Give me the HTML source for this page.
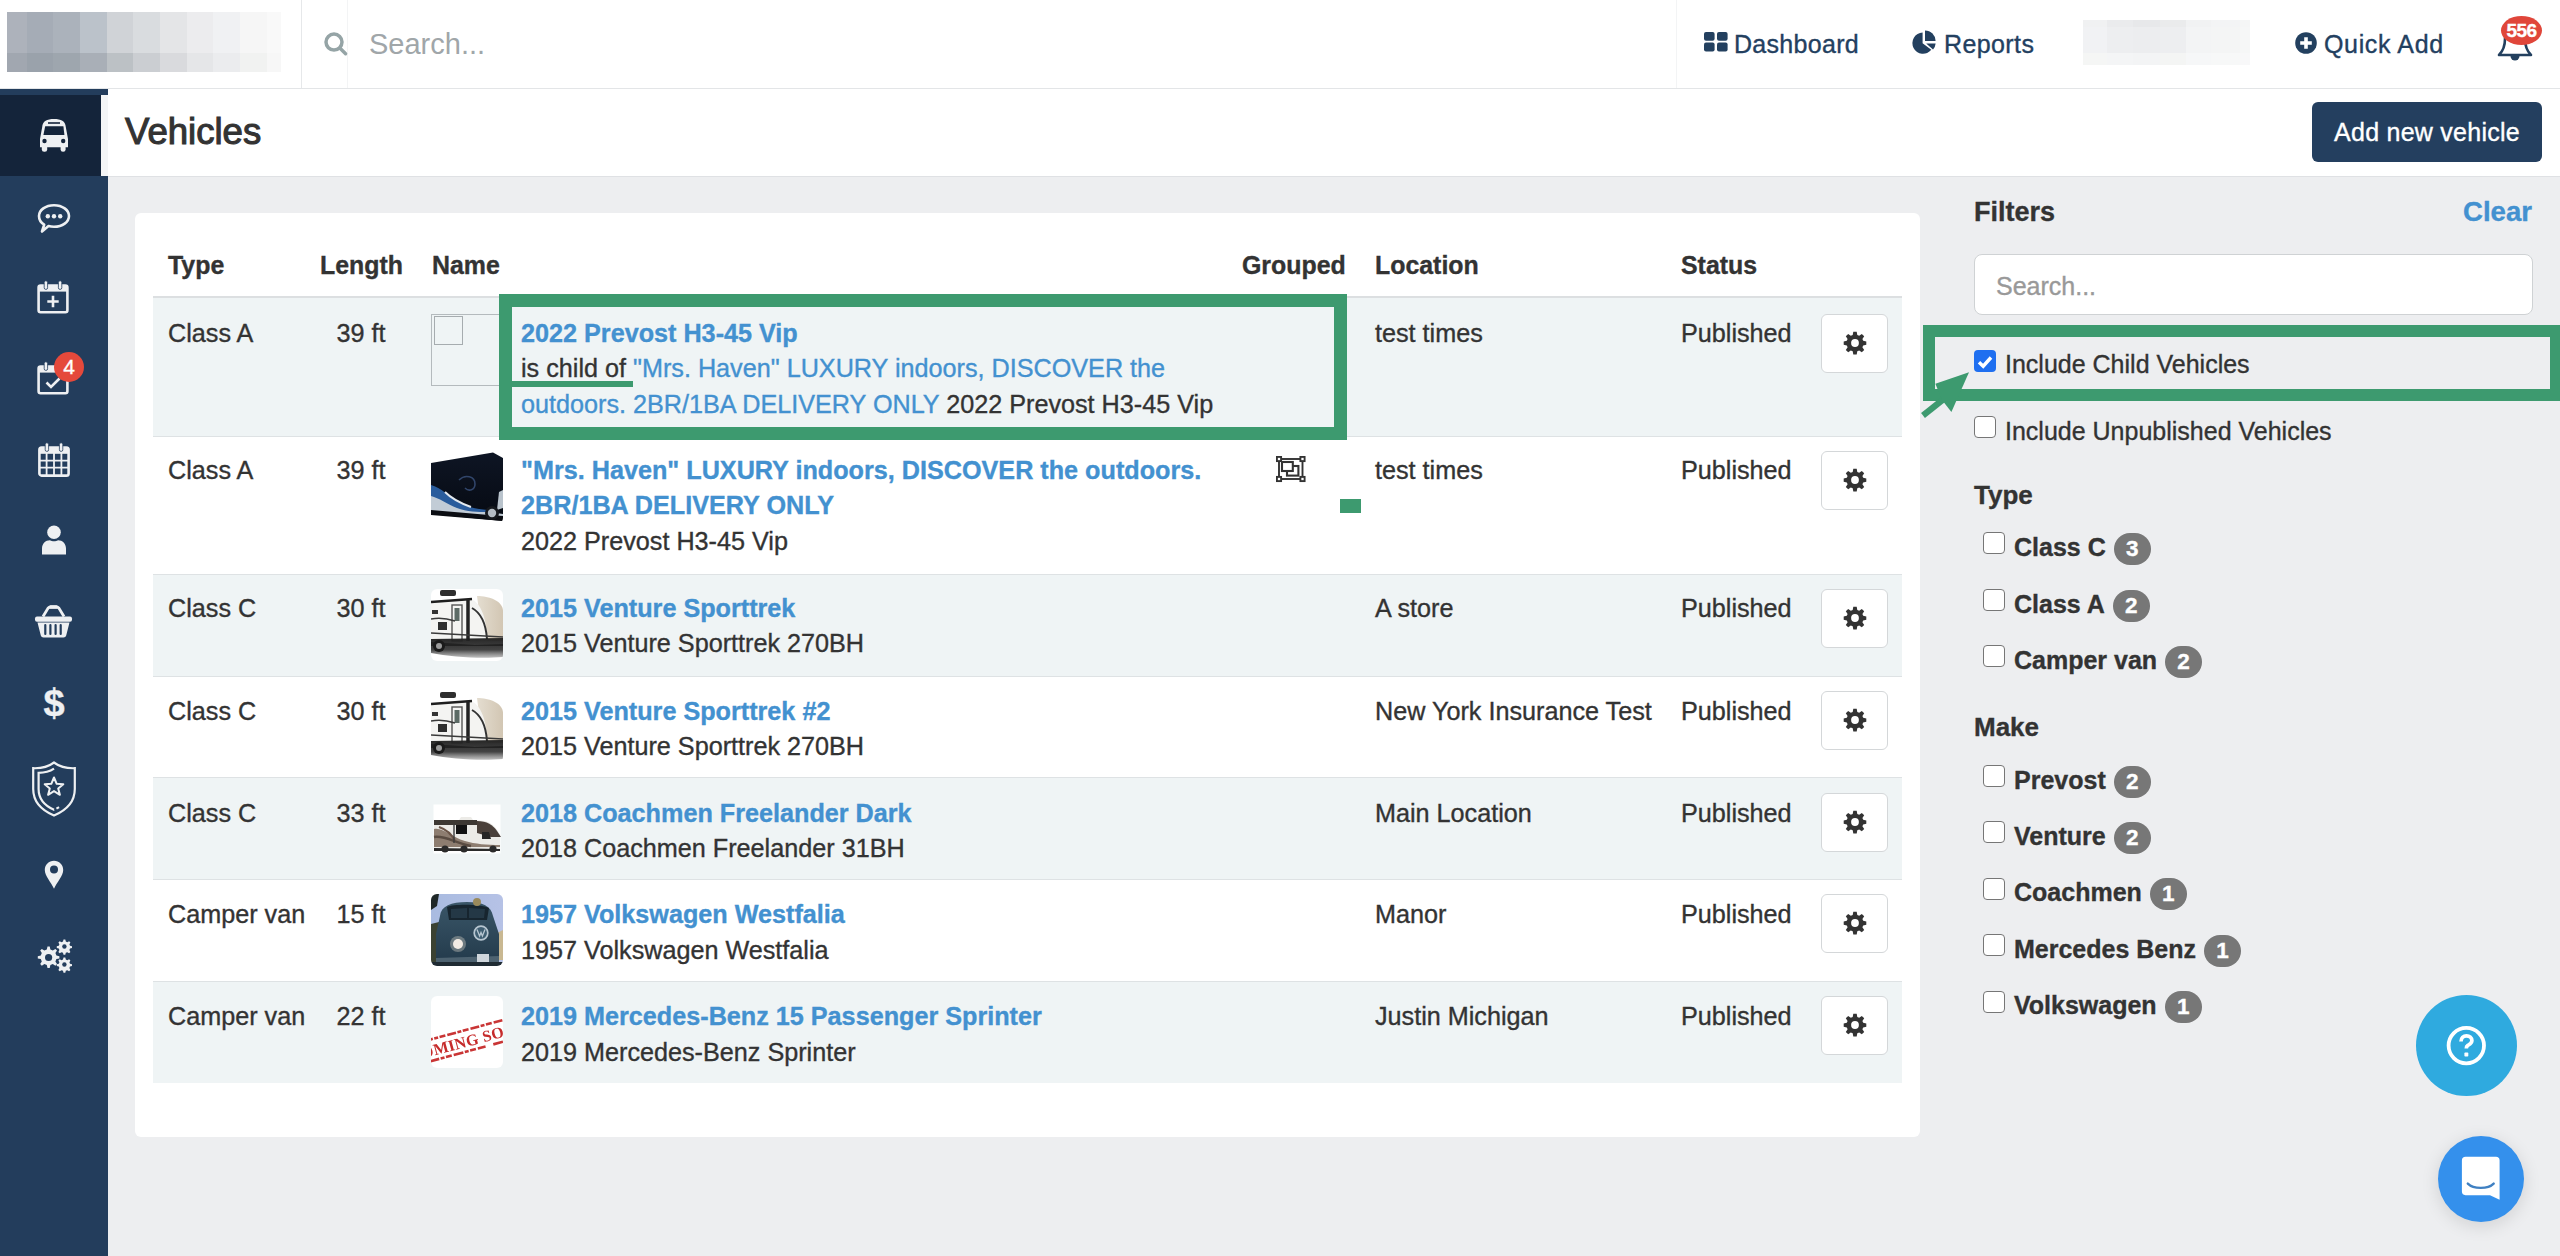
<!DOCTYPE html>
<html><head><meta charset="utf-8">
<style>
*{box-sizing:border-box;margin:0;padding:0}
html,body{width:2560px;height:1256px;overflow:hidden}
body{background:#edeef0;font-family:"Liberation Sans",sans-serif;color:#333;font-size:25.2px;position:relative;-webkit-text-stroke:0.35px currentColor}
.abs{position:absolute}
/* top bar */
#top{left:0;top:0;width:2560px;height:89px;background:#fff;border-bottom:1px solid #e3e5e7}
#logo{left:7px;top:12px;width:274px;height:60px;overflow:hidden}
#logo i{position:absolute;display:block}
#vsep{left:301px;top:0;width:1px;height:88px;background:#e6e8ea}
#srch{left:347px;top:0;width:1330px;height:88px;border-left:1px solid #f3f4f5;border-right:1px solid #f3f4f5}
#srchtxt{left:369px;top:24px;font-size:29px;color:#a0a6a9;line-height:40px;-webkit-text-stroke:0}
.nav{top:24px;line-height:40px;font-size:25px;color:#23405f}
/* sidebar */
#side{left:0;top:89px;width:108px;height:1167px;background:#233d5c}
#active{left:0;top:95px;width:101px;height:81px;background:#14243a}
#activetab{left:101px;top:95px;width:7px;height:81px;background:#f4f5f6}
.ico{position:absolute;fill:#eef0f2}
/* page header */
#ph{left:108px;top:89px;width:2452px;height:88px;background:#fff;border-bottom:1px solid #dfe1e4}
#title{left:125px;top:108px;font-size:36.6px;line-height:48px;color:#333;-webkit-text-stroke:1.1px #333}
#addbtn{left:2312px;top:102px;width:230px;height:60px;background:#243f5f;border-radius:6px;color:#fff;font-size:25px;line-height:60px;text-align:center;letter-spacing:0.25px}
/* card */
#card{left:135px;top:213px;width:1785px;height:924px;background:#fff;border-radius:6px}
.th{position:absolute;top:247px;font-weight:bold;font-size:24.9px;line-height:36px;color:#333}
#hline{left:153px;top:296px;width:1749px;height:2px;background:#dcdfe1}
.row{position:absolute;left:153px;width:1749px;border-bottom:1px solid #dee2e4}
.row.s{background:#eff4f5}
.row.last{border-bottom:none}
.cell{position:absolute;line-height:35.8px;white-space:nowrap}
.lnk{color:#4391d0}
.b{font-weight:bold}
.gear{position:absolute;left:1668px;width:67px;height:59px;background:#fff;border:1px solid #d4d7d9;border-radius:6px}
.gear svg{position:absolute;left:21px;top:16px}
.thumb{position:absolute;left:278px;width:72px;height:72px;border-radius:6px;overflow:hidden}
.thumb svg{filter:blur(0.35px)}
/* filters */
#filters{left:1974px;top:192px;font-size:27px;font-weight:bold;line-height:40px}
#clear{left:2463px;top:192px;font-size:27.6px;font-weight:bold;line-height:40px;color:#4391d0}
#fsearch{left:1974px;top:254px;width:559px;height:61px;background:#fff;border:1px solid #cfd2d4;border-radius:8px}
#fsearch span{position:absolute;left:21px;top:13px;font-size:25px;line-height:36px;color:#999}
.cb{position:absolute;width:22px;height:22px;border:1.5px solid #767676;border-radius:4px;background:#fff}
.flab{position:absolute;font-size:25px;line-height:36px;white-space:nowrap}
.fh{position:absolute;font-size:26px;font-weight:bold;line-height:36px}
.badge{display:inline-block;vertical-align:top;margin-left:8px;margin-top:4px;height:32px;min-width:37px;padding:0 11px;border-radius:16px;background:#777;color:#fff;font-size:22.5px;font-weight:bold;line-height:32px;text-align:center}
.green{position:absolute;border:13px solid #3d9a6f}
</style></head>
<body>
<div id="top" class="abs"></div>
<div id="logo" class="abs"><i style="left:0px;top:0px;width:20px;height:41px;background:#adb2bb"></i><i style="left:20px;top:0px;width:26px;height:41px;background:#a5acb6"></i><i style="left:46px;top:0px;width:27px;height:41px;background:#abb2bb"></i><i style="left:73px;top:0px;width:27px;height:41px;background:#bbc2ca"></i><i style="left:100px;top:0px;width:26px;height:41px;background:#d0d3d7"></i><i style="left:126px;top:0px;width:27px;height:41px;background:#d9dcdf"></i><i style="left:153px;top:0px;width:27px;height:41px;background:#e4e5e7"></i><i style="left:180px;top:0px;width:26px;height:41px;background:#ececee"></i><i style="left:206px;top:0px;width:27px;height:41px;background:#f0f1f3"></i><i style="left:233px;top:0px;width:27px;height:41px;background:#f6f6f6"></i><i style="left:260px;top:0px;width:14px;height:41px;background:#f9f9f9"></i><i style="left:0px;top:41px;width:20px;height:19px;background:#a1a7b0"></i><i style="left:20px;top:41px;width:26px;height:19px;background:#9aa2ab"></i><i style="left:46px;top:41px;width:27px;height:19px;background:#9ea6ae"></i><i style="left:73px;top:41px;width:27px;height:19px;background:#a9afb7"></i><i style="left:100px;top:41px;width:26px;height:19px;background:#bcc1c5"></i><i style="left:126px;top:41px;width:27px;height:19px;background:#cbced2"></i><i style="left:153px;top:41px;width:27px;height:19px;background:#d9dadd"></i><i style="left:180px;top:41px;width:26px;height:19px;background:#e5e6e8"></i><i style="left:206px;top:41px;width:27px;height:19px;background:#ebecee"></i><i style="left:233px;top:41px;width:27px;height:19px;background:#f1f2f1"></i><i style="left:260px;top:41px;width:14px;height:19px;background:#f7f7f7"></i></div>
<div id="vsep" class="abs"></div>
<div id="srch" class="abs"></div>
<div id="srchtxt" class="abs">Search...</div>
<svg class="abs" style="left:323px;top:31px" width="26" height="26" viewBox="0 0 26 26"><circle cx="11" cy="11.1" r="8" fill="none" stroke="#95a4a6" stroke-width="3.5"/><path d="M16.8 17 L22.6 22.8" stroke="#95a4a6" stroke-width="3.4" stroke-linecap="round"/></svg>
<div class="abs" style="left:2083px;top:20px;width:24px;height:7px;background:#f0f1f2"></div><div class="abs" style="left:2107px;top:20px;width:26px;height:7px;background:#eaebed"></div><div class="abs" style="left:2133px;top:20px;width:27px;height:7px;background:#e7e8ea"></div><div class="abs" style="left:2160px;top:20px;width:26px;height:7px;background:#eaebec"></div><div class="abs" style="left:2186px;top:20px;width:25px;height:7px;background:#f1f2f3"></div><div class="abs" style="left:2211px;top:20px;width:29px;height:7px;background:#f3f4f5"></div><div class="abs" style="left:2240px;top:20px;width:10px;height:7px;background:#f5f6f6"></div><div class="abs" style="left:2083px;top:27px;width:24px;height:26px;background:#f1f2f4"></div><div class="abs" style="left:2107px;top:27px;width:26px;height:26px;background:#edeef0"></div><div class="abs" style="left:2133px;top:27px;width:27px;height:26px;background:#ecedef"></div><div class="abs" style="left:2160px;top:27px;width:26px;height:26px;background:#edeef0"></div><div class="abs" style="left:2186px;top:27px;width:25px;height:26px;background:#f3f4f5"></div><div class="abs" style="left:2211px;top:27px;width:29px;height:26px;background:#f4f5f5"></div><div class="abs" style="left:2240px;top:27px;width:10px;height:26px;background:#f6f7f7"></div><div class="abs" style="left:2083px;top:53px;width:24px;height:12px;background:#f5f6f5"></div><div class="abs" style="left:2107px;top:53px;width:26px;height:12px;background:#f4f5f6"></div><div class="abs" style="left:2133px;top:53px;width:27px;height:12px;background:#f3f4f5"></div><div class="abs" style="left:2160px;top:53px;width:26px;height:12px;background:#f4f5f4"></div><div class="abs" style="left:2186px;top:53px;width:25px;height:12px;background:#f6f7f8"></div><div class="abs" style="left:2211px;top:53px;width:29px;height:12px;background:#f7f8f8"></div><div class="abs" style="left:2240px;top:53px;width:10px;height:12px;background:#f8f8f9"></div>
<svg class="abs" style="left:1704px;top:32px" width="24" height="20" viewBox="0 0 24 20"><rect x="0" y="0" width="10.6" height="8.8" rx="2" fill="#23405f"/><rect x="13" y="0" width="10.6" height="8.8" rx="2" fill="#23405f"/><rect x="0" y="10.6" width="10.6" height="8.8" rx="2" fill="#23405f"/><rect x="13" y="10.6" width="10.6" height="8.8" rx="2" fill="#23405f"/></svg>
<div class="abs nav" style="left:1734px;letter-spacing:0.3px">Dashboard</div>
<svg class="abs" style="left:1912px;top:30px" width="25" height="24" viewBox="0 0 25 24"><path d="M10.6 2.6 A10.6 10.6 0 1 0 19.3 19.8 L10.6 13.2 Z" fill="#23405f"/><path d="M13 0.5 A10.6 10.6 0 0 1 23.6 11.1 L13 11.1 Z" fill="#23405f"/><path d="M14.2 13.4 L23.6 13.4 A10.6 10.6 0 0 1 21 19.6 Z" fill="#23405f"/></svg>
<div class="abs nav" style="left:1944px;letter-spacing:0.4px">Reports</div>
<svg class="abs" style="left:2295px;top:32px" width="22" height="22" viewBox="0 0 22 22"><circle cx="11" cy="11" r="10.8" fill="#23405f"/><path d="M11 5.2 V16.8 M5.2 11 H16.8" stroke="#fff" stroke-width="3.6"/></svg>
<div class="abs nav" style="left:2324px;letter-spacing:0.65px">Quick Add</div>
<svg class="abs" style="left:2496px;top:22px" width="38" height="40" viewBox="0 0 38 40"><path d="M19 4 C11 4 9 10 9 17 C9 25 7 29 3 33 H35 C31 29 29 25 29 17 C29 10 27 4 19 4 Z" fill="none" stroke="#23405f" stroke-width="2.6" stroke-linejoin="round"/><path d="M14.5 34 A4.5 4.5 0 0 0 23.5 34 Z" fill="#23405f"/></svg>
<div class="abs" style="left:2501px;top:16px;width:41px;height:29px;border-radius:50%;background:#e0463a;color:#fff;font-weight:bold;font-size:19px;line-height:29px;text-align:center;letter-spacing:-0.5px">556</div>


<div id="side" class="abs"></div>
<div id="active" class="abs"></div>
<div id="activetab" class="abs"></div>
<svg class="abs" style="left:39px;top:118px" width="30" height="35" viewBox="0 0 30 35"><path d="M3.2 9 C3.6 3 8 1 15 1 C22 1 26.4 3 26.8 9 L29 21 L29 29.2 L1 29.2 L1 21 Z" fill="#eef0f2"/><rect x="9" y="4.2" width="12" height="1.6" fill="#14243a"/><path d="M6.2 8.3 L24.4 8.3 L25.4 16.9 L4.4 16.9 Z" fill="#14243a"/><circle cx="5.5" cy="23" r="2.2" fill="#14243a"/><circle cx="24.2" cy="23" r="2.2" fill="#14243a"/><rect x="2.8" y="27" width="5.4" height="6.8" rx="2.4" fill="#eef0f2"/><rect x="21.6" y="27" width="5" height="6.8" rx="2.4" fill="#eef0f2"/></svg>
<svg class="abs" style="left:37px;top:203px" width="34" height="31" viewBox="0 0 34 31"><path d="M17 2.2 C25.5 2.2 32 7 32 13 C32 19 25.5 23.8 17 23.8 C15 23.8 13.2 23.6 11.5 23.1 L5 28.5 L7.2 21.6 C3.7 19.6 2 16.5 2 13 C2 7 8.5 2.2 17 2.2 Z" fill="none" stroke="#eef0f2" stroke-width="2.6" stroke-linejoin="round"/><circle cx="10.8" cy="13.2" r="2.2" fill="#eef0f2"/><circle cx="17" cy="13.2" r="2.2" fill="#eef0f2"/><circle cx="23.2" cy="13.2" r="2.2" fill="#eef0f2"/></svg>
<svg class="abs" style="left:37px;top:280px" width="32" height="34" viewBox="0 0 32 34"><rect x="1.6" y="5.6" width="28.8" height="26.6" rx="2" fill="none" stroke="#eef0f2" stroke-width="2.6"/><rect x="1.6" y="5.6" width="28.8" height="6" fill="#eef0f2"/><rect x="7.2" y="0.8" width="3.4" height="8.6" rx="1.6" fill="#eef0f2" stroke="#233d5c" stroke-width="0.8"/><rect x="21.4" y="0.8" width="3.4" height="8.6" rx="1.6" fill="#eef0f2" stroke="#233d5c" stroke-width="0.8"/><path d="M16 15.8 V27.2 M10.3 21.5 H21.7" stroke="#eef0f2" stroke-width="2.6"/></svg>
<svg class="abs" style="left:37px;top:361px" width="32" height="34" viewBox="0 0 32 34"><rect x="1.6" y="5.6" width="28.8" height="26.6" rx="2" fill="none" stroke="#eef0f2" stroke-width="2.6"/><rect x="1.6" y="5.6" width="28.8" height="6" fill="#eef0f2"/><rect x="7.2" y="0.8" width="3.4" height="8.6" rx="1.6" fill="#eef0f2" stroke="#233d5c" stroke-width="0.8"/><rect x="21.4" y="0.8" width="3.4" height="8.6" rx="1.6" fill="#eef0f2" stroke="#233d5c" stroke-width="0.8"/><path d="M9.5 21.5 L14 26 L22.5 17.5" fill="none" stroke="#eef0f2" stroke-width="2.6"/></svg>
<div class="abs" style="left:54px;top:352px;width:30px;height:30px;border-radius:50%;background:#e5493b;color:#fff;font-size:21px;line-height:30px;text-align:center">4</div>
<svg class="abs" style="left:38px;top:442px" width="32" height="35" viewBox="0 0 32 35"><rect x="1.4" y="5.6" width="29.2" height="28" rx="2.2" fill="none" stroke="#eef0f2" stroke-width="2.6"/><rect x="1.4" y="5.6" width="29.2" height="6.2" fill="#eef0f2"/><rect x="7.2" y="0.8" width="3.4" height="8.6" rx="1.6" fill="#eef0f2" stroke="#233d5c" stroke-width="0.8"/><rect x="21.4" y="0.8" width="3.4" height="8.6" rx="1.6" fill="#eef0f2" stroke="#233d5c" stroke-width="0.8"/><path d="M1.4 18.6 H30.6 M1.4 25.6 H30.6 M8.6 11 V33.6 M16 11 V33.6 M23.4 11 V33.6" stroke="#eef0f2" stroke-width="1.8"/></svg>
<svg class="abs" style="left:41px;top:525px" width="26" height="30" viewBox="0 0 26 30"><circle cx="13" cy="7.2" r="6.8" fill="#eef0f2"/><path d="M1 29.5 V23.5 C1 18.5 4.5 15.2 9 15.2 C10.2 16 11.5 16.3 13 16.3 C14.5 16.3 15.8 16 17 15.2 C21.5 15.2 25 18.5 25 23.5 V29.5 Z" fill="#eef0f2"/></svg>
<svg class="abs" style="left:34px;top:604px" width="39" height="35" viewBox="0 0 39 35"><path d="M9 12.5 L14 4.2 Q15 3 16.5 3 H22.5 Q24 3 25 4.2 L30 12.5" fill="none" stroke="#eef0f2" stroke-width="2.8"/><rect x="15" y="1.2" width="9" height="3.6" rx="1.5" fill="#eef0f2"/><rect x="1" y="12.5" width="37" height="5.2" rx="2" fill="#eef0f2"/><path d="M3.5 18.5 L6.8 31.5 Q7.3 33.5 9.5 33.5 H29.5 Q31.7 33.5 32.2 31.5 L35.5 18.5 Z" fill="#eef0f2"/><path d="M11.3 21 V30 M16.4 21 V30 M21.6 21 V30 M26.7 21 V30" stroke="#233d5c" stroke-width="2.2" stroke-linecap="round"/></svg>
<div class="abs" style="left:40px;top:682px;width:28px;font-size:38px;font-weight:bold;line-height:42px;text-align:center;color:#eef0f2">$</div>
<svg class="abs" style="left:31px;top:761px" width="46" height="56" viewBox="0 0 46 56"><path d="M23 1.5 C17 6 10 7.5 2.2 7.2 C2.2 14 2.2 21 2.2 28 C2.2 41 10 49 23 54.5 C36 49 43.8 41 43.8 28 C43.8 21 43.8 14 43.8 7.2 C36 7.5 29 6 23 1.5 Z" fill="none" stroke="#eef0f2" stroke-width="2.2"/><path d="M23 7.6 C18.5 10.6 13.5 11.8 7.6 11.8 V28 C7.6 38.5 13.5 44.6 23 48.8 C32.5 44.6 38.4 38.5 38.4 28 V11.8 C32.5 11.8 27.5 10.6 23 7.6 Z" fill="none" stroke="#eef0f2" stroke-width="2.2" stroke-dasharray="60 2.5 3 1000"/><path d="M23 16.5 L25.7 22.8 L32.3 23.2 L27.2 27.4 L28.9 33.8 L23 30.1 L17.1 33.8 L18.8 27.4 L13.7 23.2 L20.3 22.8 Z" fill="none" stroke="#eef0f2" stroke-width="2" stroke-linejoin="round"/></svg>
<svg class="abs" style="left:44px;top:860px" width="20" height="30" viewBox="0 0 20 30"><path d="M10 0.8 C15.2 0.8 19.2 4.8 19.2 10 C19.2 16 13 22 10 28.8 C7 22 0.8 16 0.8 10 C0.8 4.8 4.8 0.8 10 0.8 Z" fill="#eef0f2"/><circle cx="10" cy="9.6" r="4" fill="#233d5c"/></svg>
<svg class="abs" style="left:36px;top:939px" width="37" height="34" viewBox="0 0 37 34"><g fill="#eef0f2"><path d="M11.5 7.5 l2.2 0 l0.7 3 l2.4 1 l2.6 -1.6 l1.6 1.6 l-1.6 2.6 l1 2.4 l3 0.7 l0 2.2 l-3 0.7 l-1 2.4 l1.6 2.6 l-1.6 1.6 l-2.6 -1.6 l-2.4 1 l-0.7 3 l-2.2 0 l-0.7 -3 l-2.4 -1 l-2.6 1.6 l-1.6 -1.6 l1.6 -2.6 l-1 -2.4 l-3 -0.7 l0 -2.2 l3 -0.7 l1 -2.4 l-1.6 -2.6 l1.6 -1.6 l2.6 1.6 l2.4 -1 Z"/><path d="M27.5 0.6 h1.8 l0.5 2 l1.5 0.6 l1.8 -1 l1.3 1.3 l-1 1.8 l0.6 1.5 l2 0.5 v1.8 l-2 0.5 l-0.6 1.5 l1 1.8 l-1.3 1.3 l-1.8 -1 l-1.5 0.6 l-0.5 2 h-1.8 l-0.5 -2 l-1.5 -0.6 l-1.8 1 l-1.3 -1.3 l1 -1.8 l-0.6 -1.5 l-2 -0.5 v-1.8 l2 -0.5 l0.6 -1.5 l-1 -1.8 l1.3 -1.3 l1.8 1 l1.5 -0.6 Z"/><path d="M27.5 18.6 h1.8 l0.5 2 l1.5 0.6 l1.8 -1 l1.3 1.3 l-1 1.8 l0.6 1.5 l2 0.5 v1.8 l-2 0.5 l-0.6 1.5 l1 1.8 l-1.3 1.3 l-1.8 -1 l-1.5 0.6 l-0.5 2 h-1.8 l-0.5 -2 l-1.5 -0.6 l-1.8 1 l-1.3 -1.3 l1 -1.8 l-0.6 -1.5 l-2 -0.5 v-1.8 l2 -0.5 l0.6 -1.5 l-1 -1.8 l1.3 -1.3 l1.8 1 l1.5 -0.6 Z"/></g><circle cx="12.6" cy="18.5" r="3.6" fill="#233d5c"/><circle cx="28.4" cy="7.5" r="2.2" fill="#233d5c"/><circle cx="28.4" cy="25.5" r="2.2" fill="#233d5c"/></svg>


<div id="ph" class="abs"></div>
<div id="title" class="abs">Vehicles</div>
<div id="addbtn" class="abs">Add new vehicle</div>

<div id="card" class="abs"></div>
<!--TABLE-->
<div class="th" style="left:168px">Type</div>
<div class="th" style="left:320px">Length</div>
<div class="th" style="left:432px">Name</div>
<div class="th" style="left:1242px">Grouped</div>
<div class="th" style="left:1375px">Location</div>
<div class="th" style="left:1681px">Status</div>
<div id="hline" class="abs"></div>
<div class="row s" style="top:298px;height:139px"><div class="cell" style="left:15px;top:17.5px;">Class A</div><div class="cell" style="left:167px;top:17.5px;width:82px;text-align:center">39 ft</div><div class="thumb" style="top:15.5px;border-radius:0;overflow:visible"><div style="position:absolute;left:0;top:0;width:72px;height:72px;border:1px solid #b4babd;border-right:none"></div><div style="position:absolute;left:3px;top:2px;width:29px;height:29px;border:1px solid #a6acaf"></div></div><div class="cell" style="left:368px;top:17.5px;"><span class="lnk b">2022 Prevost H3-45 Vip</span><br>is child of <span class="lnk">"Mrs. Haven" LUXURY indoors, DISCOVER the</span><br><span class="lnk">outdoors. 2BR/1BA DELIVERY ONLY</span> 2022 Prevost H3-45 Vip</div><div class="cell" style="left:1222px;top:17.5px;">test times</div><div class="cell" style="left:1528px;top:17.5px;">Published</div><div class="gear" style="top:15.6px"><svg width="24" height="24" viewBox="0 0 24 24"><path fill="#333" d="M10.3 0.8h3.4l0.6 3.1 1.9 0.8 2.6-1.8 2.4 2.4-1.8 2.6 0.8 1.9 3.1 0.6v3.4l-3.1 0.6-0.8 1.9 1.8 2.6-2.4 2.4-2.6-1.8-1.9 0.8-0.6 3.1h-3.4l-0.6-3.1-1.9-0.8-2.6 1.8-2.4-2.4 1.8-2.6-0.8-1.9-3.1-0.6v-3.4l3.1-0.6 0.8-1.9-1.8-2.6 2.4-2.4 2.6 1.8 1.9-0.8z"/><circle cx="12" cy="12" r="3.9" fill="#fff"/></svg></div></div>
<div class="row" style="top:437px;height:138px"><div class="cell" style="left:15px;top:15.5px;">Class A</div><div class="cell" style="left:167px;top:15.5px;width:82px;text-align:center">39 ft</div><div class="thumb" style="top:15px"><svg width="72" height="72" viewBox="0 0 72 72"><rect width="72" height="72" fill="#fff"/>
<defs><linearGradient id="bg1" x1="0" y1="0" x2="0" y2="1"><stop offset="0" stop-color="#0e1524"/><stop offset="1" stop-color="#060a12"/></linearGradient></defs>
<path d="M0 11 L62 0.5 L72 6 L72 69 L0 62 Z" fill="url(#bg1)"/>
<path d="M0 33 C10 36 18 44 28 50 C38 56 50 58 60 58 L60 62 L0 58 Z" fill="#2a5c9c"/>
<path d="M0 44 C8 46 16 52 26 56 C36 60 46 60 58 60 L72 62 L72 66 L0 60 Z" fill="#c2ccd6"/>
<path d="M14 40 C20 46 26 50 40 55" stroke="#e3e9ef" stroke-width="2" fill="none"/>
<path d="M68 40 L72 38 L72 56 L66 58 Z" fill="#b9c3cc"/>
<path d="M0 58 L58 63 L72 64 L72 69 L0 63 Z" fill="#0b0d12"/>
<circle cx="61" cy="61" r="7" fill="#15181d"/><circle cx="61" cy="61" r="4.2" fill="#b4bcc4"/>
<path d="M28 28 C34 22 44 24 44 32 C44 38 38 40 34 36" fill="none" stroke="#31456a" stroke-width="1.6"/></svg></div><div class="cell" style="left:368px;top:15.5px;"><span class="lnk b">"Mrs. Haven" LUXURY indoors, DISCOVER the outdoors.</span><br><span class="lnk b">2BR/1BA DELIVERY ONLY</span><br>2022 Prevost H3-45 Vip</div><div class="cell" style="left:1222px;top:15.5px;">test times</div><div class="cell" style="left:1528px;top:15.5px;">Published</div><div class="gear" style="top:14.4px"><svg width="24" height="24" viewBox="0 0 24 24"><path fill="#333" d="M10.3 0.8h3.4l0.6 3.1 1.9 0.8 2.6-1.8 2.4 2.4-1.8 2.6 0.8 1.9 3.1 0.6v3.4l-3.1 0.6-0.8 1.9 1.8 2.6-2.4 2.4-2.6-1.8-1.9 0.8-0.6 3.1h-3.4l-0.6-3.1-1.9-0.8-2.6 1.8-2.4-2.4 1.8-2.6-0.8-1.9-3.1-0.6v-3.4l3.1-0.6 0.8-1.9-1.8-2.6 2.4-2.4 2.6 1.8 1.9-0.8z"/><circle cx="12" cy="12" r="3.9" fill="#fff"/></svg></div><svg style="position:absolute;left:1123px;top:19px" width="30" height="27" viewBox="0 0 30 27"><g fill="none" stroke="#333" stroke-width="1.9"><rect x="3" y="3" width="23.5" height="20"/><rect x="0.9" y="0.9" width="4.2" height="4.2" fill="#fff"/><rect x="24.4" y="0.9" width="4.2" height="4.2" fill="#fff"/><rect x="0.9" y="20.9" width="4.2" height="4.2" fill="#fff"/><rect x="24.4" y="20.9" width="4.2" height="4.2" fill="#fff"/><rect x="11" y="10" width="11.4" height="9.6" stroke-width="2.1"/><rect x="6" y="6" width="10.8" height="9" fill="#fff" stroke-width="2.1"/></g></svg></div>
<div class="row s" style="top:575px;height:102px"><div class="cell" style="left:15px;top:15.5px;">Class C</div><div class="cell" style="left:167px;top:15.5px;width:82px;text-align:center">30 ft</div><div class="thumb" style="top:14px"><svg width="72" height="72" viewBox="0 0 72 72"><rect width="72" height="72" fill="#fff"/>
<defs><linearGradient id="tb" x1="0" y1="0" x2="1" y2="0"><stop offset="0" stop-color="#e4ddd0"/><stop offset="1" stop-color="#d2c6b3"/></linearGradient>
<linearGradient id="tsh" x1="0" y1="0" x2="0" y2="1"><stop offset="0" stop-color="#1c1c1c"/><stop offset="0.6" stop-color="#3a3a3a"/><stop offset="1" stop-color="#7a7a7a" stop-opacity="0.5"/></linearGradient></defs>
<path d="M46 7 C58 7 72 12 72 22 L72 52 L52 52 Z" fill="url(#tb)"/>
<path d="M0 13 L40 10 C50 14 56 30 56 52 L0 52 Z" fill="#f4f4f2"/>
<rect x="9" y="1" width="16" height="6" rx="2" fill="#2e2e2e"/>
<path d="M0 13 L41 10" stroke="#1e1e1e" stroke-width="2.4"/>
<path d="M37 10 V52" stroke="#222" stroke-width="3.5"/>
<rect x="21" y="16" width="10" height="36" fill="none" stroke="#555" stroke-width="1.4"/>
<rect x="23.5" y="19" width="5" height="13" fill="#5d6b66"/>
<rect x="7" y="33" width="9" height="8" fill="#2f2f2f"/>
<rect x="1" y="21" width="6" height="4" fill="#333"/>
<path d="M41 19 C50 24 55 36 56 50" stroke="#333" stroke-width="2" fill="none"/>
<path d="M0 44 L72 48 M0 30 C10 28 18 30 24 32" stroke="#3a3a3a" stroke-width="1.4" fill="none"/>
<path d="M0 50 L72 49 L72 68 C50 70 20 68 0 64 Z" fill="url(#tsh)" opacity="0.95"/>
<path d="M0 53 L44 56 L72 55 L72 57 L0 57 Z" fill="#222"/>
<circle cx="8" cy="57" r="6" fill="#1a1a1a"/><circle cx="8" cy="57" r="3" fill="#9a9a9a"/></svg></div><div class="cell" style="left:368px;top:15.5px;"><span class="lnk b">2015 Venture Sporttrek</span><br>2015 Venture Sporttrek 270BH</div><div class="cell" style="left:1222px;top:15.5px;">A store</div><div class="cell" style="left:1528px;top:15.5px;">Published</div><div class="gear" style="top:14.3px"><svg width="24" height="24" viewBox="0 0 24 24"><path fill="#333" d="M10.3 0.8h3.4l0.6 3.1 1.9 0.8 2.6-1.8 2.4 2.4-1.8 2.6 0.8 1.9 3.1 0.6v3.4l-3.1 0.6-0.8 1.9 1.8 2.6-2.4 2.4-2.6-1.8-1.9 0.8-0.6 3.1h-3.4l-0.6-3.1-1.9-0.8-2.6 1.8-2.4-2.4 1.8-2.6-0.8-1.9-3.1-0.6v-3.4l3.1-0.6 0.8-1.9-1.8-2.6 2.4-2.4 2.6 1.8 1.9-0.8z"/><circle cx="12" cy="12" r="3.9" fill="#fff"/></svg></div></div>
<div class="row" style="top:677px;height:101px"><div class="cell" style="left:15px;top:16.5px;">Class C</div><div class="cell" style="left:167px;top:16.5px;width:82px;text-align:center">30 ft</div><div class="thumb" style="top:14px"><svg width="72" height="72" viewBox="0 0 72 72"><rect width="72" height="72" fill="#fff"/>
<defs><linearGradient id="tb" x1="0" y1="0" x2="1" y2="0"><stop offset="0" stop-color="#e4ddd0"/><stop offset="1" stop-color="#d2c6b3"/></linearGradient>
<linearGradient id="tsh" x1="0" y1="0" x2="0" y2="1"><stop offset="0" stop-color="#1c1c1c"/><stop offset="0.6" stop-color="#3a3a3a"/><stop offset="1" stop-color="#7a7a7a" stop-opacity="0.5"/></linearGradient></defs>
<path d="M46 7 C58 7 72 12 72 22 L72 52 L52 52 Z" fill="url(#tb)"/>
<path d="M0 13 L40 10 C50 14 56 30 56 52 L0 52 Z" fill="#f4f4f2"/>
<rect x="9" y="1" width="16" height="6" rx="2" fill="#2e2e2e"/>
<path d="M0 13 L41 10" stroke="#1e1e1e" stroke-width="2.4"/>
<path d="M37 10 V52" stroke="#222" stroke-width="3.5"/>
<rect x="21" y="16" width="10" height="36" fill="none" stroke="#555" stroke-width="1.4"/>
<rect x="23.5" y="19" width="5" height="13" fill="#5d6b66"/>
<rect x="7" y="33" width="9" height="8" fill="#2f2f2f"/>
<rect x="1" y="21" width="6" height="4" fill="#333"/>
<path d="M41 19 C50 24 55 36 56 50" stroke="#333" stroke-width="2" fill="none"/>
<path d="M0 44 L72 48 M0 30 C10 28 18 30 24 32" stroke="#3a3a3a" stroke-width="1.4" fill="none"/>
<path d="M0 50 L72 49 L72 68 C50 70 20 68 0 64 Z" fill="url(#tsh)" opacity="0.95"/>
<path d="M0 53 L44 56 L72 55 L72 57 L0 57 Z" fill="#222"/>
<circle cx="8" cy="57" r="6" fill="#1a1a1a"/><circle cx="8" cy="57" r="3" fill="#9a9a9a"/></svg></div><div class="cell" style="left:368px;top:16.5px;"><span class="lnk b">2015 Venture Sporttrek #2</span><br>2015 Venture Sporttrek 270BH</div><div class="cell" style="left:1222px;top:16.5px;">New York Insurance Test</div><div class="cell" style="left:1528px;top:16.5px;">Published</div><div class="gear" style="top:14px"><svg width="24" height="24" viewBox="0 0 24 24"><path fill="#333" d="M10.3 0.8h3.4l0.6 3.1 1.9 0.8 2.6-1.8 2.4 2.4-1.8 2.6 0.8 1.9 3.1 0.6v3.4l-3.1 0.6-0.8 1.9 1.8 2.6-2.4 2.4-2.6-1.8-1.9 0.8-0.6 3.1h-3.4l-0.6-3.1-1.9-0.8-2.6 1.8-2.4-2.4 1.8-2.6-0.8-1.9-3.1-0.6v-3.4l3.1-0.6 0.8-1.9-1.8-2.6 2.4-2.4 2.6 1.8 1.9-0.8z"/><circle cx="12" cy="12" r="3.9" fill="#fff"/></svg></div></div>
<div class="row s" style="top:778px;height:102px"><div class="cell" style="left:15px;top:17.5px;">Class C</div><div class="cell" style="left:167px;top:17.5px;width:82px;text-align:center">33 ft</div><div class="thumb" style="top:15px"><svg width="72" height="72" viewBox="0 0 72 72"><rect x="2.5" y="11.5" width="67" height="49" fill="#fff"/>
<path d="M3 29 L28 27 L30 24 L40 24 L42 27 L54 28 C62 30 66 36 69 42 L69 56 L3 56 Z" fill="#ecebe7"/>
<path d="M3 27 L46 27 L46 32 L3 32 Z" fill="#3d3833"/>
<path d="M46 28 C56 28 62 32 66 38 L70 44 L60 44 L46 40 Z" fill="#4a403a"/>
<path d="M3 36 C12 34 20 44 34 48 C44 51 56 52 69 52 L69 54 L3 54 Z" fill="#8d7d70"/>
<path d="M3 44 C14 42 24 50 40 53" stroke="#5a4c42" stroke-width="2.4" fill="none"/>
<path d="M8 34 C14 36 20 40 24 48" stroke="#6b5548" stroke-width="2.2" fill="none"/>
<rect x="25" y="32" width="11" height="9" fill="#121212"/>
<path d="M51 39 L58 39 L60 46 L51 46 Z" fill="#262626"/>
<path d="M23 31 V50" stroke="#3b3b3b" stroke-width="1.4"/>
<path d="M3 55 L69 56 L69 58 L3 58 Z" fill="#2a2a2a"/>
<circle cx="14" cy="56" r="3.6" fill="#2a2a2a"/><circle cx="33" cy="56" r="3.6" fill="#2a2a2a"/><circle cx="62" cy="56" r="3.6" fill="#2a2a2a"/></svg></div><div class="cell" style="left:368px;top:17.5px;"><span class="lnk b">2018 Coachmen Freelander Dark</span><br>2018 Coachmen Freelander 31BH</div><div class="cell" style="left:1222px;top:17.5px;">Main Location</div><div class="cell" style="left:1528px;top:17.5px;">Published</div><div class="gear" style="top:15px"><svg width="24" height="24" viewBox="0 0 24 24"><path fill="#333" d="M10.3 0.8h3.4l0.6 3.1 1.9 0.8 2.6-1.8 2.4 2.4-1.8 2.6 0.8 1.9 3.1 0.6v3.4l-3.1 0.6-0.8 1.9 1.8 2.6-2.4 2.4-2.6-1.8-1.9 0.8-0.6 3.1h-3.4l-0.6-3.1-1.9-0.8-2.6 1.8-2.4-2.4 1.8-2.6-0.8-1.9-3.1-0.6v-3.4l3.1-0.6 0.8-1.9-1.8-2.6 2.4-2.4 2.6 1.8 1.9-0.8z"/><circle cx="12" cy="12" r="3.9" fill="#fff"/></svg></div></div>
<div class="row" style="top:880px;height:102px"><div class="cell" style="left:15px;top:17px;">Camper van</div><div class="cell" style="left:167px;top:17px;width:82px;text-align:center">15 ft</div><div class="thumb" style="top:14px"><svg width="72" height="72" viewBox="0 0 72 72"><defs><linearGradient id="sky" x1="0" y1="0" x2="1" y2="0"><stop offset="0" stop-color="#a9bbe0"/><stop offset="1" stop-color="#b6c2e6"/></linearGradient>
<linearGradient id="vwb" x1="0" y1="0" x2="0" y2="1"><stop offset="0" stop-color="#3a5668"/><stop offset="1" stop-color="#22394a"/></linearGradient></defs>
<rect width="72" height="72" fill="url(#sky)"/>
<path d="M0 0 L8 0 L6 12 L0 16 Z" fill="#202828"/>
<path d="M0 30 L8 28 L8 72 L0 72 Z" fill="#3b4232"/>
<path d="M64 40 L72 36 L72 66 L64 66 Z" fill="#c9b892"/>
<path d="M9 22 C10 12 20 8 36 8 C52 8 60 12 62 22 L68 40 L68 72 L5 72 L5 40 Z" fill="url(#vwb)"/>
<path d="M16 13 C22 10 50 10 58 14 L56 26 L18 26 Z" fill="#17252f"/>
<path d="M20 15 L36 14 L36 24 L20 24 Z M38 14 L54 15 L53 24 L38 24 Z" fill="#243846"/>
<circle cx="46" cy="8" r="4" fill="#9a8a5c"/>
<circle cx="50" cy="39" r="6.8" fill="#3f5e72" stroke="#b7c6d1" stroke-width="1.7"/>
<path d="M46 35.5 L48.6 42 L50 38.5 L51.4 42 L54 35.5" fill="none" stroke="#b7c6d1" stroke-width="1.3"/>
<circle cx="27" cy="50" r="8" fill="#e9dfd2" opacity="0.35"/><circle cx="27" cy="50" r="5" fill="#f4ece4"/>
<path d="M5 64 L68 62 L68 68 L5 70 Z" fill="#4d6270"/>
<rect x="46" y="60" width="12" height="10" fill="#cfd6dc"/>
<rect x="0" y="68" width="72" height="4" fill="#1f2b33"/></svg></div><div class="cell" style="left:368px;top:17px;"><span class="lnk b">1957 Volkswagen Westfalia</span><br>1957 Volkswagen Westfalia</div><div class="cell" style="left:1222px;top:17px;">Manor</div><div class="cell" style="left:1528px;top:17px;">Published</div><div class="gear" style="top:14px"><svg width="24" height="24" viewBox="0 0 24 24"><path fill="#333" d="M10.3 0.8h3.4l0.6 3.1 1.9 0.8 2.6-1.8 2.4 2.4-1.8 2.6 0.8 1.9 3.1 0.6v3.4l-3.1 0.6-0.8 1.9 1.8 2.6-2.4 2.4-2.6-1.8-1.9 0.8-0.6 3.1h-3.4l-0.6-3.1-1.9-0.8-2.6 1.8-2.4-2.4 1.8-2.6-0.8-1.9-3.1-0.6v-3.4l3.1-0.6 0.8-1.9-1.8-2.6 2.4-2.4 2.6 1.8 1.9-0.8z"/><circle cx="12" cy="12" r="3.9" fill="#fff"/></svg></div></div>
<div class="row s last" style="top:982px;height:101px"><div class="cell" style="left:15px;top:17px;">Camper van</div><div class="cell" style="left:167px;top:17px;width:82px;text-align:center">22 ft</div><div class="thumb" style="top:14px"><svg width="72" height="72" viewBox="0 0 72 72"><rect width="72" height="72" fill="#fff"/>
<g transform="translate(0 7) rotate(-15 36 36)"><path d="M-6 27 H80" stroke="#c93535" stroke-width="2.6" stroke-dasharray="9 1.5 4 1.5 6 2"/><path d="M-6 48 H52 M60 48 H80" stroke="#c93535" stroke-width="2.6" stroke-dasharray="10 1.5 4 1.5 6 2"/>
<text x="-12" y="43.5" font-family="Liberation Serif" font-weight="bold" font-size="16" fill="#c62b2b" letter-spacing="0.3">OMING SOO</text></g></svg></div><div class="cell" style="left:368px;top:17px;"><span class="lnk b">2019 Mercedes-Benz 15 Passenger Sprinter</span><br>2019 Mercedes-Benz Sprinter</div><div class="cell" style="left:1222px;top:17px;">Justin Michigan</div><div class="cell" style="left:1528px;top:17px;">Published</div><div class="gear" style="top:13.7px"><svg width="24" height="24" viewBox="0 0 24 24"><path fill="#333" d="M10.3 0.8h3.4l0.6 3.1 1.9 0.8 2.6-1.8 2.4 2.4-1.8 2.6 0.8 1.9 3.1 0.6v3.4l-3.1 0.6-0.8 1.9 1.8 2.6-2.4 2.4-2.6-1.8-1.9 0.8-0.6 3.1h-3.4l-0.6-3.1-1.9-0.8-2.6 1.8-2.4-2.4 1.8-2.6-0.8-1.9-3.1-0.6v-3.4l3.1-0.6 0.8-1.9-1.8-2.6 2.4-2.4 2.6 1.8 1.9-0.8z"/><circle cx="12" cy="12" r="3.9" fill="#fff"/></svg></div></div>
<!--/TABLE-->
<!--FILTERS-->
<div id="filters" class="abs">Filters</div>
<div id="clear" class="abs">Clear</div>
<div id="fsearch" class="abs"><span>Search...</span></div>
<div class="abs" style="left:1974px;top:350px;width:22px;height:22px;border-radius:4px;background:#1f6ff0"><svg width="22" height="22" viewBox="0 0 22 22"><path d="M5 11.2 L9.2 15.2 L17 6.5" fill="none" stroke="#fff" stroke-width="3.4" stroke-linecap="butt" stroke-linejoin="miter"/></svg></div>
<div class="flab" style="left:2005px;top:346px">Include Child Vehicles</div>
<div class="cb" style="left:1974px;top:416px"></div>
<div class="flab" style="left:2005px;top:413px">Include Unpublished Vehicles</div>
<div class="fh" style="left:1974px;top:477px">Type</div>
<div class="cb" style="left:1983px;top:532px"></div>
<div class="flab b" style="left:2014px;top:528.5px">Class C<span class="badge">3</span></div>
<div class="cb" style="left:1983px;top:589px"></div>
<div class="flab b" style="left:2014px;top:585.5px">Class A<span class="badge">2</span></div>
<div class="cb" style="left:1983px;top:645px"></div>
<div class="flab b" style="left:2014px;top:641.5px">Camper van<span class="badge">2</span></div>
<div class="cb" style="left:1983px;top:765px"></div>
<div class="flab b" style="left:2014px;top:761.5px">Prevost<span class="badge">2</span></div>
<div class="cb" style="left:1983px;top:821px"></div>
<div class="flab b" style="left:2014px;top:817.5px">Venture<span class="badge">2</span></div>
<div class="cb" style="left:1983px;top:877.5px"></div>
<div class="flab b" style="left:2014px;top:874.0px">Coachmen<span class="badge">1</span></div>
<div class="cb" style="left:1983px;top:934px"></div>
<div class="flab b" style="left:2014px;top:930.5px">Mercedes Benz<span class="badge">1</span></div>
<div class="cb" style="left:1983px;top:990.5px"></div>
<div class="flab b" style="left:2014px;top:987.0px">Volkswagen<span class="badge">1</span></div>
<div class="fh" style="left:1974px;top:709px">Make</div>
<div class="abs" style="left:2416px;top:995px;width:101px;height:101px;border-radius:50%;background:#2faadf"><svg width="101" height="101" viewBox="0 0 101 101"><circle cx="50.3" cy="50.6" r="17.7" fill="none" stroke="#fff" stroke-width="3.8"/><path d="M45 46.5 C45 42.8 47.4 40.8 50.5 40.8 C53.6 40.8 55.9 42.8 55.9 45.6 C55.9 48.4 53.4 49.4 51.6 50.6 C50.7 51.2 50.3 52 50.3 53.6" fill="none" stroke="#fff" stroke-width="3.7" stroke-linecap="butt"/><rect x="48.4" y="57.6" width="3.9" height="3.9" rx="0.8" fill="#fff"/></svg></div>
<div class="abs" style="left:2438px;top:1136px;width:86px;height:86px;border-radius:50%;background:#3490ec;box-shadow:0 4px 18px rgba(0,0,0,0.12)"><svg width="86" height="86" viewBox="0 0 86 86"><path d="M27.5 20.8 H58 C60.2 20.8 61.6 22.2 61.6 24.4 V63.8 L52 59.2 H27.5 C25.3 59.2 23.9 57.8 23.9 55.6 V24.4 C23.9 22.2 25.3 20.8 27.5 20.8 Z" fill="#fff"/><path d="M29.8 47.6 C35.5 53.3 50 53.3 55.7 47.6" fill="none" stroke="#3f80c2" stroke-width="2.4" stroke-linecap="round"/></svg></div>
<div class="green" style="left:499px;top:294px;width:848px;height:146px"></div>
<div class="abs" style="left:512px;top:381px;width:121px;height:6px;background:#3d9a6f"></div>
<div class="abs" style="left:1340px;top:499px;width:21px;height:14px;background:#3d9a6f"></div>
<div class="green" style="left:1923px;top:325px;width:639px;height:76px;border-width:12px"></div>
<svg class="abs" style="left:1915px;top:365px" width="60" height="56" viewBox="0 0 60 56"><path d="M8 50.5 L30 33" stroke="#3d9a6f" stroke-width="6.2"/><path d="M54 7.3 L20.4 18.7 L27 35 L36.4 47 Z" fill="#3d9a6f"/></svg>
<!--/FILTERS-->

</body></html>
